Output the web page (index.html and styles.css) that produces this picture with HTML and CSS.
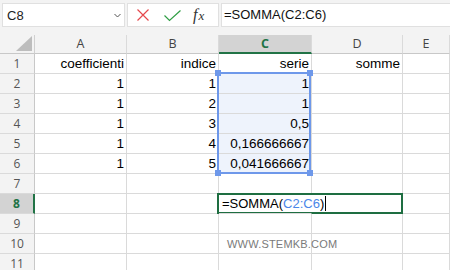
FILE: index.html
```html
<!DOCTYPE html>
<html>
<head>
<meta charset="utf-8">
<link rel="stylesheet" href="styles.css">
</head>
<body>
<div class="toolbar">
  <div class="namebox">
    <span>C8</span>
    <svg class="chev" width="7" height="5" viewBox="0 0 7 5"><polyline points="0.5,1 3.5,4 6.5,1" fill="none" stroke="#555" stroke-width="1"/></svg>
  </div>
  <div class="fbtns">
    <svg class="ic-x" width="12" height="12" viewBox="0 0 12 12"><path d="M0.5 0.5 L11.5 11.5 M11.5 0.5 L0.5 11.5" stroke="#e5484d" stroke-width="1.2" fill="none"/></svg>
    <svg class="ic-ok" width="17" height="12" viewBox="0 0 17 12"><polyline points="0.5,5.5 5.5,10.5 16.5,0.5" fill="none" stroke="#2f9e44" stroke-width="1.2"/></svg>
    <span class="fx">f<span class="fx-x">x</span></span>
  </div>
  <div class="finput">=SOMMA(C2:C6)</div>
</div>
<div class="sheet">
  <div class="grid">
    <div class="corner"><svg width="16" height="15" viewBox="0 0 16 15"><polygon points="16,0 16,15 0,15" fill="#bdbdbd"/></svg></div>
    <div class="ch">A</div><div class="ch">B</div><div class="ch ch-sel">C</div><div class="ch">D</div><div class="ch">E</div>

    <div class="rh">1</div><div class="c">coefficienti</div><div class="c">indice</div><div class="c">serie</div><div class="c">somme</div><div class="c"></div>
    <div class="rh">2</div><div class="c">1</div><div class="c">1</div><div class="c fill">1</div><div class="c"></div><div class="c"></div>
    <div class="rh">3</div><div class="c">1</div><div class="c">2</div><div class="c fill">1</div><div class="c"></div><div class="c"></div>
    <div class="rh">4</div><div class="c">1</div><div class="c">3</div><div class="c fill">0,5</div><div class="c"></div><div class="c"></div>
    <div class="rh">5</div><div class="c">1</div><div class="c">4</div><div class="c fill">0,166666667</div><div class="c"></div><div class="c"></div>
    <div class="rh">6</div><div class="c">1</div><div class="c">5</div><div class="c fill">0,041666667</div><div class="c"></div><div class="c"></div>
    <div class="rh">7</div><div class="c"></div><div class="c"></div><div class="c"></div><div class="c"></div><div class="c"></div>
    <div class="rh rh-sel">8</div><div class="c"></div><div class="c"></div><div class="c edit">=SOMMA(<span class="ref">C2:C6</span>)<span class="caret"></span></div><div class="c"></div><div class="c"></div>
    <div class="rh">9</div><div class="c"></div><div class="c"></div><div class="c"></div><div class="c"></div><div class="c"></div>
    <div class="rh">10</div><div class="c"></div><div class="c"></div><div class="c"></div><div class="c"></div><div class="c"></div>
    <div class="rh">11</div><div class="c"></div><div class="c"></div><div class="c"></div><div class="c"></div><div class="c"></div>
  </div>
  <div class="selection">
    <i class="hdl tl"></i><i class="hdl tr"></i><i class="hdl bl"></i><i class="hdl br"></i>
  </div>
  <div class="active"></div>
  <div class="watermark">WWW.STEMKB.COM</div>
</div>
</body>
</html>
```

FILE: styles.css
```css
* { box-sizing: border-box; }
html, body { margin: 0; padding: 0; }
body {
  width: 450px;
  height: 270px;
  overflow: hidden;
  background: #fff;
  font-family: "Liberation Sans", Arial, sans-serif;
}

.toolbar {
  display: flex;
  align-items: flex-start;
  gap: 2px;
  height: 35px;
  padding: 3px 0 0 2px;
  background: #f3f3f3;
}
.namebox {
  width: 123px;
  height: 24px;
  background: #fff;
  border: 1px solid #e0e0e0;
  display: flex;
  align-items: center;
  justify-content: space-between;
  padding: 0 3px 0 4px;
  font-size: 13px;
  color: #222;
}
.chev { margin-top: 1px; }
.fbtns {
  width: 92px;
  height: 24px;
  background: #fff;
  border: 1px solid #e0e0e0;
  display: flex;
  align-items: center;
  padding-left: 9px;
}
.ic-x { margin-right: 15px; }
.ic-ok { margin-right: 12px; margin-top: 1px; }
.fx {
  font-family: "Liberation Serif", "Times New Roman", serif;
  font-style: italic;
  font-size: 16px;
  color: #333;
  line-height: 1;
}
.fx-x { font-size: 13px; margin-left: 1px; }
.finput {
  flex: 1;
  height: 24px;
  background: #fff;
  border: 1px solid #e0e0e0;
  border-right: none;
  padding-left: 2px;
  font-size: 13px;
  line-height: 22px;
  color: #111;
}

.sheet { position: relative; }
.grid {
  display: grid;
  grid-template-columns: 35px 92px 92px 93px 91px 1fr;
  grid-template-rows: 19px;
  grid-auto-rows: 20px;
}
.corner {
  background: #f3f3f3;
  border-right: 1px solid #d0d0d0;
  border-bottom: 1px solid #c8c8c8;
  display: flex;
  justify-content: flex-end;
  align-items: flex-end;
  padding: 0 2px 2px 0;
}
.corner svg { display: block; }
.ch {
  background: #f3f3f3;
  border-right: 1px solid #dadada;
  border-bottom: 1px solid #c8c8c8;
  font-family: "Open Sans", "Noto Sans", sans-serif;
  font-size: 12.5px;
  line-height: 18px;
  text-align: center;
  color: #444;
}
.ch-sel {
  background: #d3d3d3;
  border-bottom: 2px solid #217346;
  color: #217346;
  font-weight: bold;
  line-height: 17px;
}
.rh {
  background: #f3f3f3;
  border-right: 1px solid #c8c8c8;
  border-bottom: 1px solid #dadada;
  font-family: "Open Sans", "Noto Sans", sans-serif;
  font-size: 12px;
  line-height: 19px;
  text-align: center;
  color: #555;
}
.rh-sel {
  background: #d3d3d3;
  border-right: 2px solid #217346;
  color: #217346;
  font-weight: bold;
}
.c {
  border-right: 1px solid #dadada;
  border-bottom: 1px solid #dadada;
  font-size: 13.5px;
  line-height: 19px;
  text-align: right;
  padding: 0 2px;
  white-space: nowrap;
  color: #000;
}
.fill { background: #eef3fc; }
.edit {
  text-align: left;
  overflow: visible;
  border-right-color: transparent;
  padding-left: 3px;
  font-size: 13px;
  position: relative;
  z-index: 1;
}
.ref { color: #4a86e8; }
.caret {
  display: inline-block;
  width: 1px;
  height: 15px;
  background: #000;
  vertical-align: -3px;
  margin-left: 1px;
}

.selection {
  position: absolute;
  left: 217px;
  top: 37px;
  width: 94px;
  height: 102px;
  border: 2px solid #6e98ea;
}
.hdl {
  position: absolute;
  width: 6px;
  height: 6px;
  background: #6e98ea;
}
.tl { left: -4px; top: -4px; }
.tr { right: -4px; top: -4px; }
.bl { left: -4px; bottom: -4px; }
.br { right: -4px; bottom: -4px; }

.active {
  position: absolute;
  left: 217px;
  top: 158px;
  width: 186px;
  height: 21px;
  border: 2px solid #1e6e41;
}
.watermark {
  position: absolute;
  left: 227px;
  top: 203px;
  font-size: 11px;
  line-height: 12px;
  letter-spacing: 0.2px;
  color: #7a7a7a;
}
```
